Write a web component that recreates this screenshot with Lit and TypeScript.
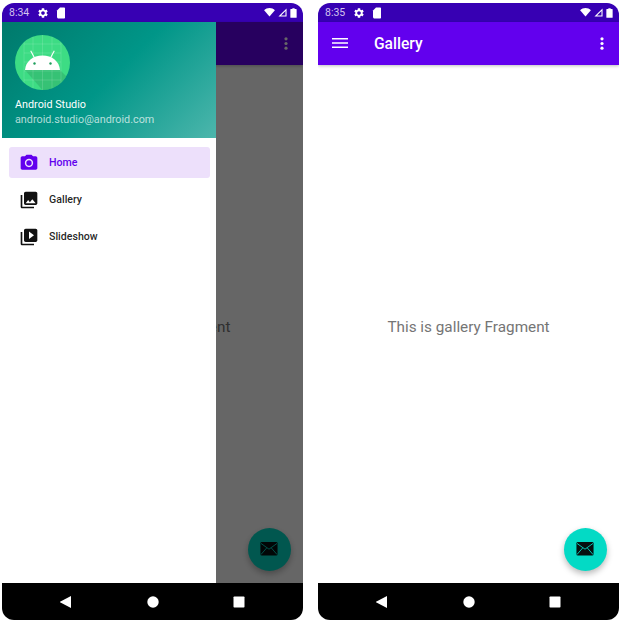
import { LitElement, html, css, svg } from "lit";
import { customElement, property } from "lit/decorators.js";

const GEAR = "M19.14 12.94c.04-.3.06-.61.06-.94 0-.32-.02-.64-.07-.94l2.03-1.58c.18-.14.23-.41.12-.61l-1.92-3.32c-.12-.22-.37-.29-.59-.22l-2.39.96c-.5-.38-1.03-.7-1.62-.94l-.36-2.54c-.04-.24-.24-.41-.48-.41h-3.84c-.24 0-.43.17-.47.41l-.36 2.54c-.59.24-1.13.57-1.62.94l-2.39-.96c-.22-.08-.47 0-.59.22L2.74 8.87c-.12.21-.08.47.12.61l2.03 1.58c-.05.3-.09.63-.09.94s.02.64.07.94l-2.03 1.58c-.18.14-.23.41-.12.61l1.92 3.32c.12.22.37.29.59.22l2.39-.96c.5.38 1.03.7 1.62.94l.36 2.54c.05.24.24.41.48.41h3.84c.24 0 .44-.17.47-.41l.36-2.54c.59-.24 1.13-.56 1.62-.94l2.39.96c.22.08.47 0 .59-.22l1.92-3.32c.12-.22.07-.47-.12-.61l-2.01-1.58zM12 15.6c-1.98 0-3.6-1.62-3.6-3.6s1.62-3.6 3.6-3.6 3.6 1.62 3.6 3.6-1.62 3.6-3.6 3.6z";
const CAMERA = "M9 2L7.17 4H4c-1.1 0-2 .9-2 2v12c0 1.1.9 2 2 2h16c1.1 0 2-.9 2-2V6c0-1.1-.9-2-2-2h-3.17L15 2H9zm3 15c-2.76 0-5-2.24-5-5s2.24-5 5-5 5 2.24 5 5-2.24 5-5 5z";
const GALLERY = "M22 16V4c0-1.1-.9-2-2-2H8c-1.1 0-2 .9-2 2v12c0 1.1.9 2 2 2h12c1.1 0 2-.9 2-2zm-11-4l2.03 2.71L16 11l4 5H8l3-4zM2 6v14c0 1.1.9 2 2 2h14v-2H4V6H2z";
const SLIDESHOW = "M4 6H2v14c0 1.1.9 2 2 2h14v-2H4V6zM20 2H8C6.9 2 6 2.9 6 4v12c0 1.1.9 2 2 2h12c1.1 0 2-.9 2-2V4C22 2.9 21.1 2 20 2zM12 14.5v-9l6 4.5L12 14.5z";

const menu = [
  { label: "Home", icon: svg`<path d=${CAMERA}/><circle cx="12" cy="12" r="3.2"/>`, active: true },
  { label: "Gallery", icon: svg`<path d=${GALLERY}/>`, active: false },
  { label: "Slideshow", icon: svg`<path d=${SLIDESHOW}/>`, active: false },
];

@customElement("app-phone")
export class AppPhone extends LitElement {
  @property() time = "";
  @property() title = "";
  @property() message = "";
  @property({ type: Boolean }) drawer = false;

  static styles = css`
    :host {
      display: flex;
      flex-direction: column;
      position: relative;
      width: 301px;
      height: 617px;
      overflow: hidden;
      border-radius: 12px;
      background: #fff;
      font-family: Roboto, "Liberation Sans", sans-serif;
    }
    .status {
      flex: 0 0 19px;
      display: flex;
      align-items: center;
      padding: 0 6px 0 7px;
      background: #3700b3;
      color: #d3c4ef;
      font-size: 10.5px;
    }
    .status svg {
      display: block;
      fill: #fff;
    }
    .gear {
      margin-left: 8px;
    }
    .card {
      margin-left: 6px;
    }
    .right {
      margin-left: auto;
      display: flex;
      align-items: center;
      gap: 3px;
    }
    .bar {
      flex: 0 0 43px;
      display: flex;
      align-items: center;
      padding: 0 15px 0 14px;
      background: #6200ee;
      color: #fff;
      box-shadow: 0 1px 3px rgba(0, 0, 0, 0.25);
      position: relative;
    }
    .bar h1 {
      margin: 1px 0 0 26px;
      font-size: 15.6px;
      font-weight: 500;
    }
    .burger {
      display: block;
      margin-top: -1px;
      fill: #fff;
    }
    .more {
      display: block;
      margin-left: auto;
      fill: #fff;
    }
    .content {
      flex: 1;
      display: flex;
      align-items: center;
      justify-content: center;
      padding-top: 5px;
      color: #757575;
      font-size: 15.3px;
    }
    .nav {
      flex: 0 0 37px;
      display: flex;
      align-items: center;
      justify-content: center;
      gap: 72px;
      background: #000;
      position: relative;
      z-index: 3;
    }
    .nav svg {
      display: block;
      fill: #fff;
    }
    .fab {
      position: absolute;
      right: 12.5px;
      bottom: 49.5px;
      width: 43px;
      height: 43px;
      border-radius: 50%;
      background: #03dac5;
      display: flex;
      align-items: center;
      justify-content: center;
      box-shadow: 0 3px 6px rgba(0, 0, 0, 0.28);
    }
    .scrim {
      position: absolute;
      top: 19px;
      left: 0;
      right: 0;
      bottom: 37px;
      background: rgba(0, 0, 0, 0.6);
    }
    .drawer {
      position: absolute;
      top: 19px;
      left: 0;
      bottom: 37px;
      width: 214px;
      background: #fff;
    }
    .header {
      box-sizing: border-box;
      height: 115.5px;
      padding: 13px 13px 0;
      color: #fff;
      background: linear-gradient(135deg, #00796b 0%, #009688 50%, #4db6ac 100%);
    }
    .avatar {
      display: block;
      width: 55px;
      height: 55px;
    }
    .name {
      margin-top: 8px;
      font-size: 10.8px;
      line-height: 14px;
    }
    .mail {
      font-size: 10.8px;
      line-height: 15px;
      color: rgba(255, 255, 255, 0.7);
    }
    .items {
      padding: 9.5px 6px 0 7px;
      display: flex;
      flex-direction: column;
      gap: 6px;
    }
    .item {
      height: 31px;
      display: flex;
      align-items: center;
      padding-left: 10px;
      gap: 10px;
      border-radius: 3px;
      font-size: 10.6px;
      font-weight: 500;
      color: rgba(0, 0, 0, 0.87);
    }
    .item svg {
      display: block;
      fill: #111;
    }
    .item.active {
      background: #ede0fb;
      color: #6200ee;
    }
    .item.active svg {
      fill: #6200ee;
    }
  `;

  renderAvatar() {
    return html`<svg class="avatar" viewBox="0 0 55 55">
      <defs>
        <clipPath id="disc"><circle cx="27.5" cy="27.5" r="27.5"/></clipPath>
      </defs>
      <g clip-path="url(#disc)">
        <rect width="55" height="55" fill="#3ddc84"/>
        <path d="M10 35h35L58 48v10H30z" fill="#2fa866" opacity="0.5"/>
        <path d="M9 9H46M9 18H46M9 27H46M9 36H46M9 45H46M9 0V55M18 0V55M27.5 0V55M37 0V55M46 0V55"
          stroke="#fff" stroke-opacity="0.2" stroke-width="0.7" fill="none"/>
      </g>
      <path d="M15.700 15.700l4 7.500M39.300 15.700l-4 7.500" stroke="#fff" stroke-width="1.100"/>
      <path d="M10 35c.6-8.600 8-14.500 17.500-14.500S44.400 26.400 45 35z" fill="#fff"/>
      <circle cx="19.500" cy="28.500" r="1.200" fill="#1e9e5c"/>
      <circle cx="35.500" cy="28.500" r="1.200" fill="#1e9e5c"/>
    </svg>`;
  }

  renderDrawer() {
    return html`
      <div class="scrim"></div>
      <div class="drawer">
        <div class="header">
          ${this.renderAvatar()}
          <div class="name">Android Studio</div>
          <div class="mail">android.studio@android.com</div>
        </div>
        <div class="items">
          ${menu.map(
            (m) => html`<div class="item ${m.active ? "active" : ""}">
              <svg width="20" height="20" viewBox="0 0 24 24">${m.icon}</svg>
              <span>${m.label}</span>
            </div>`
          )}
        </div>
      </div>
    `;
  }

  render() {
    return html`
      <div class="status">
        <span>${this.time}</span>
        <svg class="gear" width="12" height="12" viewBox="0 0 24 24"><path d=${GEAR}/></svg>
        <svg class="card" width="12" height="12" viewBox="0 0 24 24"><path d="M18 1h-8L4 7v13c0 1.600 1.400 3 3 3h11c1.100 0 2-.9 2-2V3c0-1.100-.9-2-2-2z"/></svg>
        <div class="right">
          <svg width="11" height="9" viewBox="0 0 12 10"><path d="M0 2.500C1.600 1 3.700 0 6 0s4.400 1 6 2.500L6 9.500z"/></svg>
          <svg width="9" height="9" viewBox="0 0 10 10"><path d="M9.500.5v9H.5zM8.300 3.400 3.400 8.300h4.900z" fill-rule="evenodd"/></svg>
          <svg width="7" height="10" viewBox="0 0 8 11"><path d="M2.700 0h2.600v1H7a.6.6 0 0 1 .6.600v8.800A.6.6 0 0 1 7 11H1a.6.6 0 0 1-.6-.6V1.600A.6.6 0 0 1 1 1h1.700z"/></svg>
        </div>
      </div>
      <div class="bar">
        <svg class="burger" width="16" height="10" viewBox="0 0 16 10">
          <rect width="16" height="1.500" y="0"/>
          <rect width="16" height="1.500" y="4.250"/>
          <rect width="16" height="1.500" y="8.500"/>
        </svg>
        <h1>${this.title}</h1>
        <svg class="more" width="4" height="13" viewBox="0 0 4 13">
          <circle cx="2" cy="1.800" r="1.600"/>
          <circle cx="2" cy="6.500" r="1.600"/>
          <circle cx="2" cy="11.200" r="1.600"/>
        </svg>
      </div>
      <div class="content">${this.message}</div>
      <div class="fab">
        <svg width="18" height="13.500" viewBox="0 0 19 15">
          <rect width="19" height="15" rx="1.500" fill="#06100f"/>
          <path d="M.5 1.500 9.500 8 18.500 1.500M.5 14 7 6.500M18.500 14 12 6.500" fill="none" stroke="#03dac5" stroke-width="1"/>
        </svg>
      </div>
      ${this.drawer ? this.renderDrawer() : ""}
      <div class="nav">
        <svg width="14" height="14" viewBox="0 0 14 14"><path d="M11 1v12L-.5 7z"/></svg>
        <svg width="14" height="14" viewBox="0 0 14 14"><circle cx="7" cy="7" r="5.700"/></svg>
        <svg width="14" height="14" viewBox="0 0 14 14"><rect x="1.500" y="1.500" width="11" height="11" rx="0.8"/></svg>
      </div>
    `;
  }
}

@customElement("app-root")
export class AppRoot extends LitElement {
  static styles = css`
    :host {
      display: flex;
      gap: 15px;
      padding: 3px 0 0 2px;
      width: 625px;
      height: 626px;
      box-sizing: border-box;
      background: #fff;
    }
  `;

  render() {
    return html`
      <app-phone time="8:34" title="Home" message="This is home Fragment" drawer></app-phone>
      <app-phone time="8:35" title="Gallery" message="This is gallery Fragment"></app-phone>
    `;
  }
}
